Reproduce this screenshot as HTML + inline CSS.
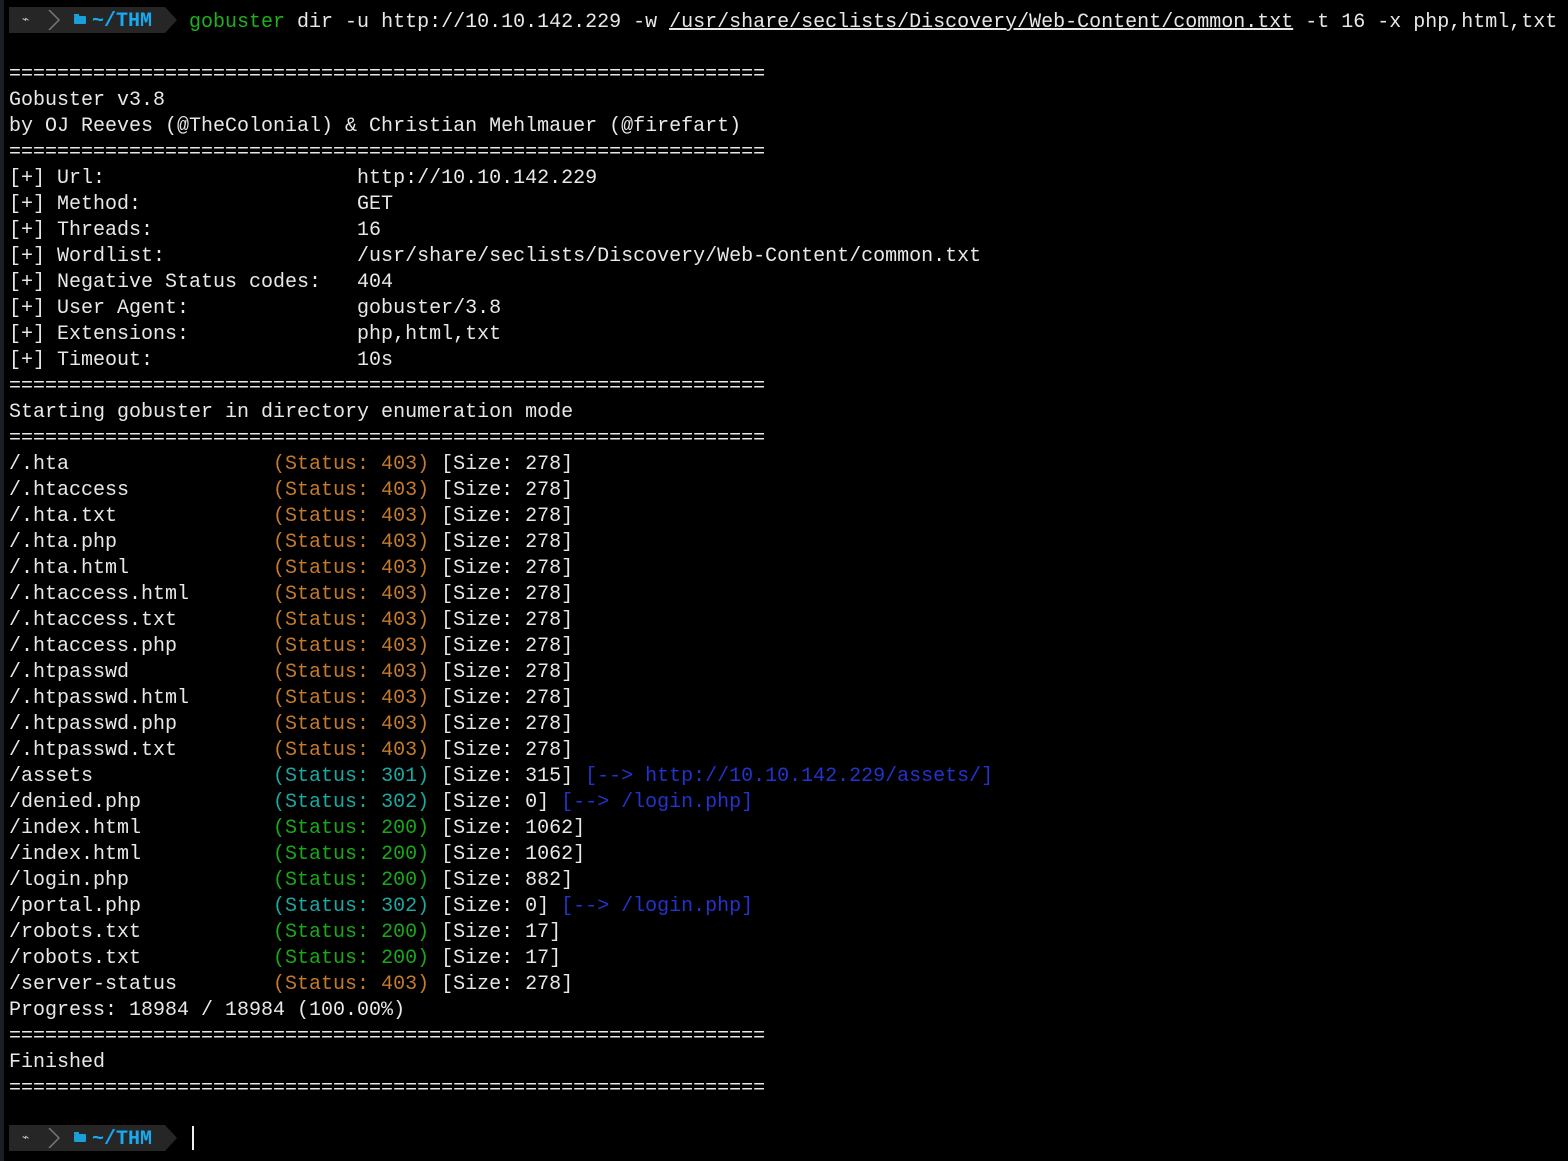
<!DOCTYPE html>
<html><head><meta charset="utf-8">
<style>
html,body{margin:0;padding:0;background:#000;width:1568px;height:1161px;overflow:hidden}
body{position:relative;border-left:4px solid #1b1e23;box-sizing:border-box}
pre{position:absolute;left:5px;top:10px;margin:0;font-family:"Liberation Mono","DejaVu Sans Mono",monospace;font-size:20px;line-height:26px;color:#e8e8e8;white-space:pre}
.g{color:#1fb01f}.o{color:#c47a2c}.t{color:#1aa8a0}.s{color:#1aa81a}.b{color:#2333cc}.u{text-decoration:underline}
.pr{position:absolute;left:5px;height:26px;width:156px;background:#262626;font-family:"Liberation Mono",monospace;font-size:20px;line-height:26px}
.pr:after{content:"";position:absolute;right:-12px;top:0;border-left:12px solid #262626;border-top:13px solid transparent;border-bottom:13px solid transparent}
.pr .ic{position:absolute;left:13px;top:0;color:#ccc;font-size:12px}
.pr .chev{position:absolute;left:38px;top:3px;width:14px;height:20px}
.pr .fold{position:absolute;left:65px;top:9px;width:12px;height:8px;background:#1aa0d8;border-radius:1px}
.pr .fold:before{content:"";position:absolute;left:0;top:-2px;width:5px;height:2px;background:#1aa0d8}
.pr .dir{position:absolute;left:83px;top:2px;color:#17aaf0;font-weight:bold}
.cur{position:absolute;left:188px;top:1126px;width:2px;height:24px;background:#eee}
</style></head><body>
<div class="pr" style="top:7px"><span class="ic">⌁</span><svg class="chev" viewBox="0 0 14 20"><path d="M2 0 L12 10 L2 20" stroke="#777" stroke-width="1.5" fill="none"/></svg><span class="fold"></span><span class="dir">~/THM</span></div>
<div class="pr" style="top:1125px"><span class="ic">⌁</span><svg class="chev" viewBox="0 0 14 20"><path d="M2 0 L12 10 L2 20" stroke="#777" stroke-width="1.5" fill="none"/></svg><span class="fold"></span><span class="dir">~/THM</span></div>
<div class="cur"></div>
<pre>               <span class="g">gobuster</span> dir -u http://10.10.142.229 -w <span class="u">/usr/share/seclists/Discovery/Web-Content/common.txt</span> -t 16 -x php,html,txt

===============================================================
Gobuster v3.8
by OJ Reeves (@TheColonial) &amp; Christian Mehlmauer (@firefart)
===============================================================
[+] Url:                     http://10.10.142.229
[+] Method:                  GET
[+] Threads:                 16
[+] Wordlist:                /usr/share/seclists/Discovery/Web-Content/common.txt
[+] Negative Status codes:   404
[+] User Agent:              gobuster/3.8
[+] Extensions:              php,html,txt
[+] Timeout:                 10s
===============================================================
Starting gobuster in directory enumeration mode
===============================================================
/.hta                 <span class="o">(Status: 403)</span> [Size: 278]
/.htaccess            <span class="o">(Status: 403)</span> [Size: 278]
/.hta.txt             <span class="o">(Status: 403)</span> [Size: 278]
/.hta.php             <span class="o">(Status: 403)</span> [Size: 278]
/.hta.html            <span class="o">(Status: 403)</span> [Size: 278]
/.htaccess.html       <span class="o">(Status: 403)</span> [Size: 278]
/.htaccess.txt        <span class="o">(Status: 403)</span> [Size: 278]
/.htaccess.php        <span class="o">(Status: 403)</span> [Size: 278]
/.htpasswd            <span class="o">(Status: 403)</span> [Size: 278]
/.htpasswd.html       <span class="o">(Status: 403)</span> [Size: 278]
/.htpasswd.php        <span class="o">(Status: 403)</span> [Size: 278]
/.htpasswd.txt        <span class="o">(Status: 403)</span> [Size: 278]
/assets               <span class="t">(Status: 301)</span> [Size: 315] <span class="b">[--&gt; http://10.10.142.229/assets/]</span>
/denied.php           <span class="t">(Status: 302)</span> [Size: 0] <span class="b">[--&gt; /login.php]</span>
/index.html           <span class="s">(Status: 200)</span> [Size: 1062]
/index.html           <span class="s">(Status: 200)</span> [Size: 1062]
/login.php            <span class="s">(Status: 200)</span> [Size: 882]
/portal.php           <span class="t">(Status: 302)</span> [Size: 0] <span class="b">[--&gt; /login.php]</span>
/robots.txt           <span class="s">(Status: 200)</span> [Size: 17]
/robots.txt           <span class="s">(Status: 200)</span> [Size: 17]
/server-status        <span class="o">(Status: 403)</span> [Size: 278]
Progress: 18984 / 18984 (100.00%)
===============================================================
Finished
===============================================================
</pre>
</body></html>
